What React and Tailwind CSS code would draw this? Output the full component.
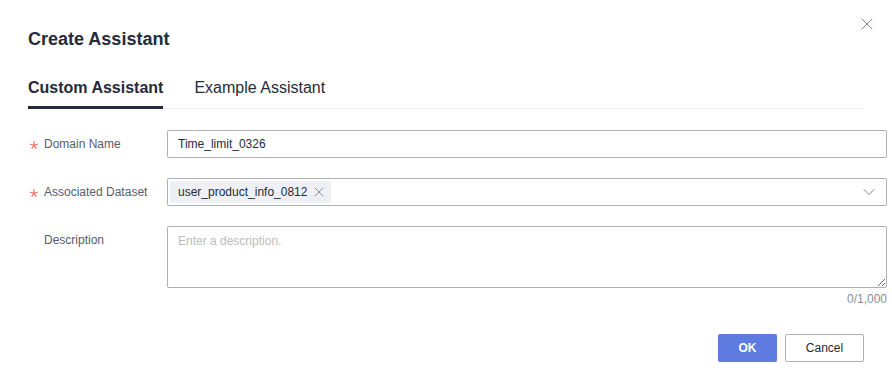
import { X, ChevronDown } from "lucide-react";

// five-arm red asterisk for required fields
const Star = () => (
  <svg width="8" height="8" viewBox="0 0 8 8" className="text-[#f66f6a]">
    <g stroke="currentColor" strokeWidth="1.2" strokeLinecap="round">
      <line x1="4" y1="4.3" x2="4" y2="0.6" />
      <line x1="4" y1="4.3" x2="0.6" y2="3.2" />
      <line x1="4" y1="4.3" x2="7.4" y2="3.2" />
      <line x1="4" y1="4.3" x2="1.9" y2="7.3" />
      <line x1="4" y1="4.3" x2="6.1" y2="7.3" />
    </g>
  </svg>
);

const Label = ({ required, children }) => (
  <div className="w-[139px] shrink-0 h-[28px] flex items-center text-[12px] text-[#575d6c]">
    <span className="w-[16px] pl-[2px] flex items-center translate-y-[1px]">
      {required ? <Star /> : null}
    </span>
    <span>{children}</span>
  </div>
);

const App = () => {
  return (
    <div
      className="relative w-[892px] h-[384px] bg-white overflow-hidden"
      style={{ fontFamily: '"Liberation Sans", Arial, sans-serif' }}
    >
      <button type="button" className="absolute top-[14px] right-[15px] text-[#71757f]">
        <X size={20} strokeWidth={1.1} />
      </button>

      <div className="pl-[28px] pt-[27px]">
        <h2 className="text-[18px] leading-[24px] font-bold text-[#252b3a]">
          Create Assistant
        </h2>
      </div>

      <div className="mx-[28px] mt-[25px] flex gap-[31px] border-b border-[#eef0f5]">
        <div className="pb-[6px] border-b-[3px] border-[#252b3a] -mb-px text-[16px] leading-[24px] font-bold text-[#252b3a]">
          Custom Assistant
        </div>
        <div className="pb-[6px] text-[16px] leading-[24px] text-[#252b3a]">
          Example Assistant
        </div>
      </div>

      <div className="pl-[28px] pr-[5px] mt-[21px] flex flex-col gap-[20px]">
        <div className="flex">
          <Label required>Domain Name</Label>
          <div className="flex-1 h-[28px] border border-[#adb0b8] rounded-[2px] px-[10px] flex items-center text-[12px] text-[#252b3a]">
            Time_limit_0326
          </div>
        </div>

        <div className="flex">
          <Label required>Associated Dataset</Label>
          <div className="flex-1 h-[28px] border border-[#adb0b8] rounded-[2px] pl-[2px] pr-[7px] flex items-center justify-between">
            <span className="h-[22px] bg-[#eef0f5] rounded-[2px] pl-[8px] pr-[4px] flex items-center gap-[4px] text-[12px] text-[#252b3a]">
              user_product_info_0812
              <X size={16} strokeWidth={1.2} className="text-[#71757f]" />
            </span>
            <ChevronDown size={20} strokeWidth={1.1} className="text-[#71757f]" />
          </div>
        </div>

        <div className="flex">
          <Label>Description</Label>
          <div className="flex-1 flex flex-col">
            <textarea
              placeholder="Enter a description."
              className="h-[62px] border border-[#adb0b8] rounded-[2px] px-[10px] py-[5px] text-[12px] leading-[18px] text-[#252b3a] placeholder:text-[#babbc0] resize-y outline-none"
            />
            <div className="mt-[3px] text-right text-[12px] leading-[16px] text-[#8a8e99]">0/1,000</div>
          </div>
        </div>
      </div>

      <div className="mt-[27px] pr-[28px] flex justify-end gap-[8px]">
        <button
          type="button"
          className="w-[59px] h-[28px] rounded-[2px] bg-[#5e7ce0] text-white text-[12px] font-bold"
        >
          OK
        </button>
        <button
          type="button"
          className="w-[79px] h-[28px] rounded-[2px] border border-[#adb0b8] bg-white text-[#252b3a] text-[12px]"
        >
          Cancel
        </button>
      </div>
    </div>
  );
};

export default App;
